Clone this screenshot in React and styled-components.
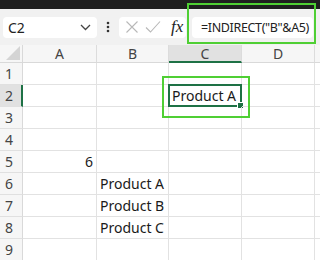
import styled, { createGlobalStyle } from 'styled-components';

const GlobalStyle = createGlobalStyle`
  html, body {
    margin: 0;
    padding: 0;
    background: #fff;
  }
  body {
    width: 320px;
    height: 260px;
    overflow: hidden;
    font-family: "Noto Sans", "Open Sans", sans-serif;
  }
`;

const Page = styled.div`
  position: relative;
  width: 320px;
  height: 260px;
  overflow: hidden;
`;

const TopBand = styled.div`
  height: 9px;
  background: #1f1f1f;
`;

const Toolbar = styled.div`
  height: 36px;
  background: #f1f1f1;
  display: flex;
  align-items: center;
  padding-left: 3px;
  box-sizing: border-box;
`;

const NameBox = styled.div`
  width: 94px;
  height: 21px;
  background: #fff;
  border-radius: 4px;
  display: flex;
  align-items: center;
  justify-content: space-between;
  padding: 0 6px 0 5px;
  box-sizing: border-box;
  font-size: 14px;
  color: #222;
`;

const Dots = styled.div`
  width: 22px;
  display: flex;
  justify-content: center;
`;

const ActionBox = styled.div`
  width: 67px;
  height: 21px;
  background: #fff;
  border-radius: 4px;
  display: flex;
  align-items: center;
  gap: 6px;
  padding-left: 6px;
  box-sizing: border-box;
`;

const Fx = styled.span`
  font-family: "Liberation Serif", serif;
  font-style: italic;
  font-size: 17px;
  color: #222;
  margin-left: 4px;
`;

const FormulaBox = styled.div`
  margin-left: 6px;
  width: 121px;
  height: 21px;
  background: #fff;
  border-radius: 4px;
  display: flex;
  align-items: center;
  padding-left: 9px;
  box-sizing: border-box;
  font-size: 12.5px;
  letter-spacing: -0.35px;
  color: #222;
  white-space: nowrap;
`;

const Grid = styled.div`
  display: grid;
  grid-template-columns: 23px 74px 72px 73px 73px 1fr;
  grid-template-rows: 18px repeat(9, 22px);
`;

const Corner = styled.div`
  background: #f6f6f6;
  border-right: 1px solid #d9d9d9;
  border-bottom: 1px solid #d9d9d9;
  box-sizing: border-box;
  display: flex;
  align-items: flex-end;
  justify-content: flex-end;
  padding: 0 2px 2px 0;
`;

const ColHead = styled.div`
  background: ${p => (p.$active ? '#e1e1e1' : '#f6f6f6')};
  border-right: 1px solid #dcdcdc;
  border-bottom: ${p => (p.$active ? '2px solid #1e7145' : '1px solid #d9d9d9')};
  box-sizing: border-box;
  display: flex;
  align-items: center;
  justify-content: center;
  font-size: 14px;
  color: #444;
`;

const RowHead = styled.div`
  background: ${p => (p.$active ? '#e1e1e1' : '#f6f6f6')};
  border-right: ${p => (p.$active ? '2px solid #1e7145' : '1px solid #d9d9d9')};
  border-bottom: 1px solid #e0e0e0;
  box-sizing: border-box;
  display: flex;
  align-items: center;
  padding-left: 5px;
  font-size: 14px;
  color: #444;
`;

const Cell = styled.div`
  position: relative;
  border-right: 1px solid #e2e2e2;
  border-bottom: 1px solid #e2e2e2;
  box-sizing: border-box;
  display: flex;
  align-items: center;
  justify-content: ${p => (p.$right ? 'flex-end' : 'flex-start')};
  padding: 0 3px;
  font-size: 14px;
  color: #1a1a1a;
  white-space: nowrap;
`;

const Selection = styled.div`
  position: absolute;
  left: -1px;
  top: -1px;
  right: -1px;
  bottom: -1px;
  border: 2px solid #1e7145;
  pointer-events: none;

  &::after {
    content: '';
    position: absolute;
    right: -4px;
    bottom: -4px;
    width: 5px;
    height: 5px;
    background: #1e7145;
    border: 1px solid #fff;
  }
`;

const Highlight = styled.div`
  position: absolute;
  border: 2px solid #4fcf34;
  box-sizing: border-box;
  pointer-events: none;
`;

const cols = ['A', 'B', 'C', 'D', ''];
const data = {
  2: { 2: 'Product A' },
  5: { 0: '6' },
  6: { 1: 'Product A' },
  7: { 1: 'Product B' },
  8: { 1: 'Product C' },
};

const Chevron = () => (
  <svg width="11" height="7" viewBox="0 0 11 7">
    <path d="M1 1l4.5 4.5L10 1" fill="none" stroke="#444" strokeWidth="1.3" />
  </svg>
);

const VDots = () => (
  <svg width="4" height="12" viewBox="0 0 4 12">
    <circle cx="2" cy="2" r="1.3" fill="#333" />
    <circle cx="2" cy="6" r="1.3" fill="#333" />
    <circle cx="2" cy="10" r="1.3" fill="#333" />
  </svg>
);

const Cross = () => (
  <svg width="14" height="14" viewBox="0 0 14 14">
    <path d="M1.5 1.5l11 11M12.5 1.5l-11 11" stroke="#b8b8b8" strokeWidth="1.1" />
  </svg>
);

const Check = () => (
  <svg width="16" height="14" viewBox="0 0 16 14">
    <path d="M1 7.5l4.5 4.5L15 1.5" fill="none" stroke="#b8b8b8" strokeWidth="1.1" />
  </svg>
);

const Triangle = () => (
  <svg width="14" height="14" viewBox="0 0 14 14">
    <path d="M14 0L14 14L0 14Z" fill="#d4d4d4" />
  </svg>
);

export default function App() {
  const rows = [1, 2, 3, 4, 5, 6, 7, 8, 9];
  return (
    <Page>
      <GlobalStyle />
      <TopBand />
      <Toolbar>
        <NameBox>
          <span>C2</span>
          <Chevron />
        </NameBox>
        <Dots>
          <VDots />
        </Dots>
        <ActionBox>
          <Cross />
          <Check />
          <Fx>fx</Fx>
        </ActionBox>
        <FormulaBox>=INDIRECT("B"&amp;A5)</FormulaBox>
      </Toolbar>
      <Grid>
        <Corner>
          <Triangle />
        </Corner>
        {cols.map((c, i) => (
          <ColHead key={i} $active={c === 'C'}>{c}</ColHead>
        ))}
        {rows.map(r => (
          <>
            <RowHead key={'h' + r} $active={r === 2}>{r}</RowHead>
            {cols.map((c, i) => (
              <Cell key={r + '-' + i} $right={r === 5 && i === 0}>
                {data[r] && data[r][i]}
                {r === 2 && i === 2 && <Selection />}
              </Cell>
            ))}
          </>
        ))}
      </Grid>
      <Highlight style={{ left: 187, top: 3, width: 129, height: 41 }} />
      <Highlight style={{ left: 162, top: 76, width: 88, height: 42 }} />
    </Page>
  );
}
